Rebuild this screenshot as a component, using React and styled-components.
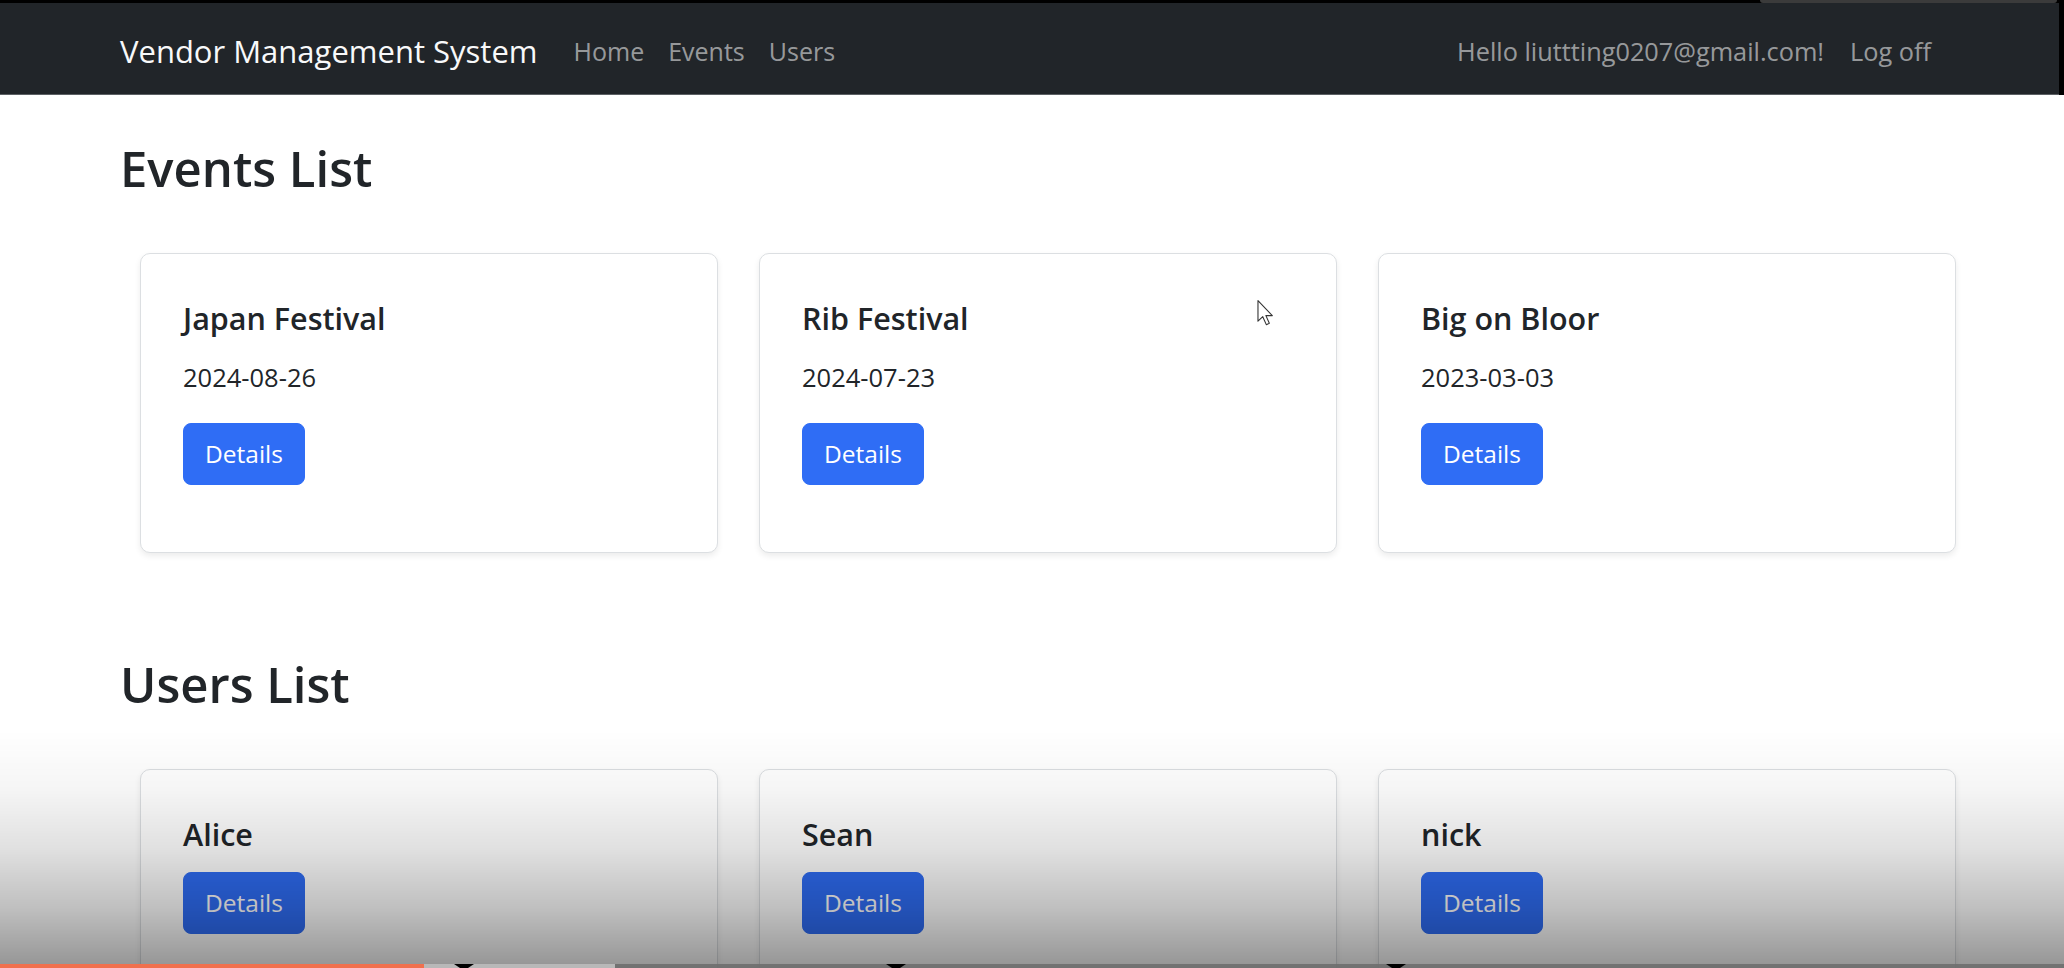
import React from "react";
import styled, { createGlobalStyle } from "styled-components";

const events = [
  { id: 1, name: "Japan Festival", date: "2024-08-26" },
  { id: 2, name: "Rib Festival", date: "2024-07-23" },
  { id: 3, name: "Big on Bloor", date: "2023-03-03" },
];

const users = [
  { id: 1, name: "Alice" },
  { id: 2, name: "Sean" },
  { id: 3, name: "nick" },
];

const chapters = [454, 886, 1386];

const GlobalStyle = createGlobalStyle`
  html, body {
    margin: 0;
    height: 968px;
    overflow: hidden;
    background: #fff;
  }
  body {
    font-family: "Open Sans", "Noto Sans", "Liberation Sans", sans-serif;
    color: #212529;
    -webkit-font-smoothing: antialiased;
  }
`;

const App = () => {
  return (
    <>
      <GlobalStyle />
      <Frame>
        <PlayerChrome />
        <Navbar>
          <NavInner>
            <Brand href="#">Vendor Management System</Brand>
            <NavList>
              <NavLink href="#">Home</NavLink>
              <NavLink href="#">Events</NavLink>
              <NavLink href="#">Users</NavLink>
            </NavList>
            <NavRight>
              <NavLink href="#">Hello liuttting0207@gmail.com!</NavLink>
              <NavLink href="#">Log off</NavLink>
            </NavRight>
          </NavInner>
        </Navbar>
      </Frame>

      <Main>
        <Section>
          <SectionTitle>Events List</SectionTitle>
          <CardGrid>
            {events.map((ev) => (
              <Card key={ev.id}>
                <CardTitle $gap={22}>{ev.name}</CardTitle>
                <CardText>{ev.date}</CardText>
                <DetailsButton>Details</DetailsButton>
              </Card>
            ))}
          </CardGrid>
        </Section>

        <Section>
          <SectionTitle>Users List</SectionTitle>
          <CardGrid>
            {users.map((u) => (
              <Card key={u.id}>
                <CardTitle $gap={20}>{u.name}</CardTitle>
                <DetailsButton>Details</DetailsButton>
              </Card>
            ))}
          </CardGrid>
        </Section>
      </Main>

      <Cursor viewBox="0 0 12 19" width="17" height="26">
        <path
          d="M0.5 0.5 L0.5 15.5 L4 12.2 L6.6 18 L8.8 17 L6.3 11.4 L11 11.4 Z"
          fill="#fff"
          stroke="#333"
          strokeWidth="0.8"
          strokeLinejoin="round"
        />
      </Cursor>

      <VideoShade />
      <ProgressTrack>
        <Played />
        <Buffered />
        {chapters.map((x) => (
          <ChapterMark key={x} style={{ left: x }} />
        ))}
      </ProgressTrack>
    </>
  );
};

const Frame = styled.div`
  position: relative;
  background: #000;
  padding: 3px 5px 0 0;
`;

const PlayerChrome = styled.div`
  position: absolute;
  top: 0;
  left: 1760px;
  width: 297px;
  height: 3px;
  background: #3b3b3b;
  border-radius: 0 0 8px 8px;
`;

const Navbar = styled.nav`
  background: #212529;
  height: 92px;
  border-bottom: 1px solid #5c6064;
  box-sizing: border-box;
`;

const NavInner = styled.div`
  display: flex;
  align-items: center;
  height: 100%;
  padding: 6px 0 0 120px;
  box-sizing: border-box;
  width: 1944px;
`;

const Brand = styled.a`
  color: #f8f9fa;
  font-size: 31px;
  line-height: 1.5;
  text-decoration: none;
  margin-right: 24px;
`;

const NavList = styled.div`
  display: flex;
  flex: 1;

  a {
    font-size: 25px;
    padding: 0 12px;
  }
`;

const NavRight = styled.div`
  display: flex;
`;

const NavLink = styled.a`
  color: rgba(255, 255, 255, 0.55);
  font-size: 25.3px;
  line-height: 1.5;
  text-decoration: none;
  padding: 0 13px;
`;

const Main = styled.main`
  padding: 44px 0 0 120px;
`;

const Section = styled.section`
  margin-bottom: 102px;
`;

const SectionTitle = styled.h1`
  margin: 0 0 55px;
  font-size: 49px;
  font-weight: 600;
  line-height: 1.2;
`;

const CardGrid = styled.div`
  display: grid;
  grid-template-columns: repeat(3, 578px);
  gap: 41px;
  padding-left: 20px;
`;

const Card = styled.div`
  background: #fff;
  border: 1px solid #dcdfe2;
  border-radius: 10px;
  box-shadow: 0 3px 6px rgba(0, 0, 0, 0.08);
  padding: 46px 42px 69px;
  height: 300px;
  box-sizing: border-box;
`;

const CardTitle = styled.h5`
  margin: 0 0 ${(p) => p.$gap}px;
  font-size: 30.5px;
  font-weight: 600;
  line-height: 1.2;
`;

const CardText = styled.p`
  margin: 0 0 26px;
  font-size: 25.5px;
  line-height: 1.5;
`;

const DetailsButton = styled.button`
  font-family: inherit;
  font-size: 24.5px;
  line-height: 38px;
  color: #fff;
  background: #2f6df5;
  border: 1px solid #2f6df5;
  border-radius: 8px;
  padding: 11px 21px;
  cursor: pointer;
`;

const Cursor = styled.svg`
  position: absolute;
  left: 1257px;
  top: 300px;
`;

const VideoShade = styled.div`
  position: fixed;
  left: 0;
  right: 0;
  top: 730px;
  height: 238px;
  pointer-events: none;
  background: linear-gradient(
    to bottom,
    rgba(0, 0, 0, 0) 0%,
    rgba(0, 0, 0, 0.04) 25%,
    rgba(0, 0, 0, 0.12) 50%,
    rgba(0, 0, 0, 0.25) 75%,
    rgba(0, 0, 0, 0.42) 100%
  );
`;

const ProgressTrack = styled.div`
  position: fixed;
  left: 0;
  right: 0;
  bottom: 0;
  height: 4px;
  background: rgba(110, 110, 110, 0.9);
`;

const Played = styled.div`
  position: absolute;
  left: 0;
  top: 0;
  bottom: 0;
  width: 424px;
  background: #f0704e;
`;

const Buffered = styled.div`
  position: absolute;
  left: 424px;
  top: 0;
  bottom: 0;
  width: 191px;
  background: #b8b8b8;
`;

const ChapterMark = styled.div`
  position: absolute;
  top: 0;
  width: 20px;
  height: 4px;
  background: #000;
  clip-path: polygon(0 0, 100% 0, 70% 100%, 30% 100%);
`;

export default App;
